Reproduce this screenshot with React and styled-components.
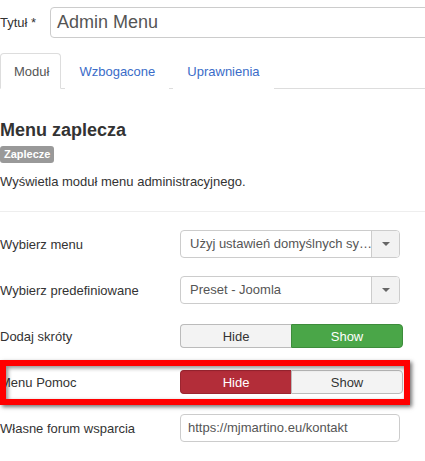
import React from "react";
import styled, { createGlobalStyle } from "styled-components";

const Global = createGlobalStyle`
  html, body { margin: 0; padding: 0; background: #fff; }
  body { font-family: "Liberation Sans", Arial, sans-serif; font-size: 13px; color: #333; }
  * { box-sizing: border-box; }
`;

const Page = styled.div`
  width: 425px;
  height: 461px;
  overflow: hidden;
`;

const TitleRow = styled.div`
  display: flex;
  align-items: center;
  height: 31px;
  margin-top: 7px;
`;

const TitleLabel = styled.label`
  width: 50px;
  flex: none;
  font-size: 13px;
  color: #333;
`;

const TitleInput = styled.div`
  flex: none;
  width: 420px;
  height: 31px;
  border: 1px solid #ccc;
  border-radius: 4px;
  padding: 0 6px;
  display: flex;
  align-items: center;
  font-size: 18px;
  color: #555;
`;

const Tabs = styled.ul`
  list-style: none;
  margin: 15px 0 0;
  padding: 0;
  display: flex;
  border-bottom: 1px solid #ddd;
  height: 36px;
`;

const Tab = styled.li`
  height: 36px;
  margin-right: 4px;
  margin-bottom: -1px;
  padding: 0 ${(p) => (p.$active ? "11px 0 13px" : "13px")};
  display: flex;
  align-items: center;
  font-size: 13px;
  color: ${(p) => (p.$active ? "#555" : "#3a6cc8")};
  background: #fff;
  border: 1px solid ${(p) => (p.$active ? "#ddd" : "transparent")};
  border-bottom-color: ${(p) => (p.$active ? "#fff" : "transparent")};
  border-radius: 4px 4px 0 0;
`;

const Heading = styled.h3`
  margin: 30px 0 0;
  font-size: 18px;
  font-weight: bold;
  line-height: 22px;
  color: #333;
`;

const Badge = styled.span`
  display: inline-block;
  margin-top: 5px;
  height: 17px;
  line-height: 17px;
  padding: 0 4px;
  background: #999;
  color: #fff;
  font-size: 11px;
  font-weight: bold;
  border-radius: 3px;
`;

const Desc = styled.p`
  margin: 10px 0 0;
  font-size: 13px;
  line-height: 18px;
  color: #333;
`;

const Rule = styled.hr`
  margin: 20px 0 9px;
  border: 0;
  border-top: 1px solid #eee;
`;

const Row = styled.div`
  position: relative;
  display: flex;
  align-items: center;
  height: 46px;
`;

const Label = styled.label`
  width: 180px;
  flex: none;
  font-size: 13px;
  color: #333;
`;

const Select = styled.div`
  width: 220px;
  height: 28px;
  display: flex;
  border: 1px solid #ccc;
  border-radius: 4px;
  background: #fff;
  overflow: hidden;
`;

const SelectText = styled.span`
  flex: 1;
  min-width: 0;
  padding: 0 2px 0 9px;
  line-height: 26px;
  font-size: 13px;
  color: #555;
  white-space: nowrap;
  overflow: hidden;
`;

const Caret = styled.span`
  width: 28px;
  flex: none;
  background: #f2f2f2;
  border-left: 1px solid #ccc;
  display: flex;
  align-items: center;
  justify-content: center;
  &::after {
    content: "";
    border-left: 4px solid transparent;
    border-right: 4px solid transparent;
    border-top: 4px solid #666;
  }
`;

const Toggle = styled.div`
  width: 223px;
  height: 24px;
  display: flex;
`;

const ToggleBtn = styled.span`
  flex: 1;
  display: flex;
  align-items: center;
  justify-content: center;
  font-size: 13px;
  color: ${(p) => (p.$on ? "#fff" : "#333")};
  background: ${(p) => (p.$on ? p.$color : "#f3f3f3")};
  border: 1px solid ${(p) => (p.$on ? p.$border : "#bbb")};
  border-radius: ${(p) => (p.$first ? "4px 0 0 4px" : "0 4px 4px 0")};
  ${(p) => (p.$first ? "border-right: 0;" : "")}
`;

const TextInput = styled.div`
  width: 220px;
  height: 28px;
  border: 1px solid #ccc;
  border-radius: 4px;
  padding: 0 7px;
  line-height: 26px;
  font-size: 13px;
  color: #555;
`;

const Highlight = styled.div`
  position: absolute;
  left: 0;
  top: 1px;
  width: 410px;
  height: 45px;
  border: 6px solid #ff0000;
  box-shadow: 2px 2px 4px rgba(0, 0, 0, 0.55), inset 2px 2px 4px rgba(0, 0, 0, 0.45);
  pointer-events: none;
`;

const YesNo = ({ value }) => (
  <Toggle>
    <ToggleBtn $first $on={value === "hide"} $color="#b32d39" $border="#9c2530">
      Hide
    </ToggleBtn>
    <ToggleBtn $on={value === "show"} $color="#4aa648" $border="#3d8c3b">
      Show
    </ToggleBtn>
  </Toggle>
);

export default function App() {
  return (
    <Page>
      <Global />
      <TitleRow>
        <TitleLabel>Tytuł *</TitleLabel>
        <TitleInput>Admin Menu</TitleInput>
      </TitleRow>
      <Tabs>
        <Tab $active>Moduł</Tab>
        <Tab>Wzbogacone</Tab>
        <Tab>Uprawnienia</Tab>
      </Tabs>
      <Heading>Menu zaplecza</Heading>
      <Badge>Zaplecze</Badge>
      <Desc>Wyświetla moduł menu administracyjnego.</Desc>
      <Rule />
      <Row>
        <Label>Wybierz menu</Label>
        <Select>
          <SelectText>Użyj ustawień domyślnych sy…</SelectText>
          <Caret />
        </Select>
      </Row>
      <Row>
        <Label>Wybierz predefiniowane</Label>
        <Select>
          <SelectText>Preset - Joomla</SelectText>
          <Caret />
        </Select>
      </Row>
      <Row>
        <Label>Dodaj skróty</Label>
        <YesNo value="show" />
      </Row>
      <Row>
        <Label>Menu Pomoc</Label>
        <YesNo value="hide" />
        <Highlight />
      </Row>
      <Row>
        <Label>Własne forum wsparcia</Label>
        <TextInput>https://mjmartino.eu/kontakt</TextInput>
      </Row>
    </Page>
  );
}
